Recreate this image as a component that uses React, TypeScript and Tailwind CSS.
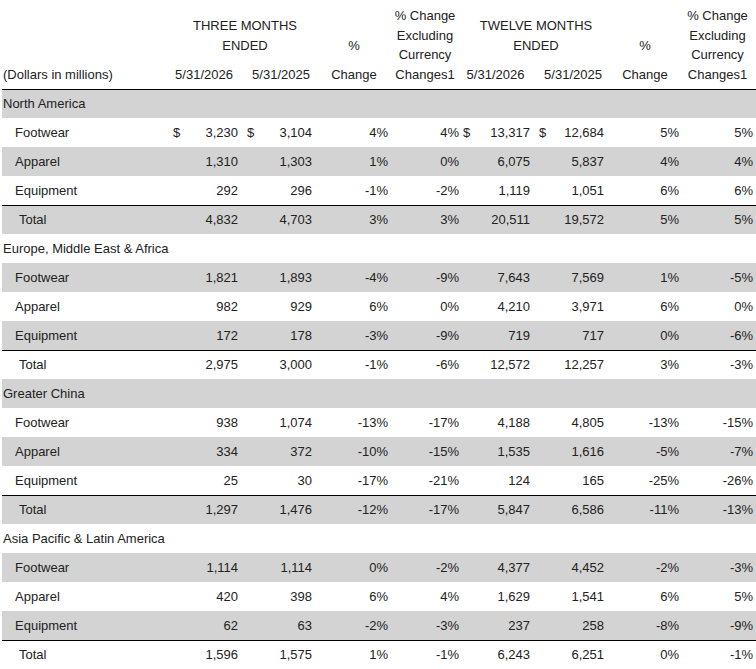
import React from "react";

type Row = { kind: "region" | "item" | "total"; label: string; v?: string[]; dollar?: boolean };

const regions: { name: string; rows: [string, string[]][] }[] = [
  {
    name: "North America",
    rows: [
      ["Footwear", ["3,230", "3,104", "4%", "4%", "13,317", "12,684", "5%", "5%"]],
      ["Apparel", ["1,310", "1,303", "1%", "0%", "6,075", "5,837", "4%", "4%"]],
      ["Equipment", ["292", "296", "-1%", "-2%", "1,119", "1,051", "6%", "6%"]],
      ["Total", ["4,832", "4,703", "3%", "3%", "20,511", "19,572", "5%", "5%"]],
    ],
  },
  {
    name: "Europe, Middle East & Africa",
    rows: [
      ["Footwear", ["1,821", "1,893", "-4%", "-9%", "7,643", "7,569", "1%", "-5%"]],
      ["Apparel", ["982", "929", "6%", "0%", "4,210", "3,971", "6%", "0%"]],
      ["Equipment", ["172", "178", "-3%", "-9%", "719", "717", "0%", "-6%"]],
      ["Total", ["2,975", "3,000", "-1%", "-6%", "12,572", "12,257", "3%", "-3%"]],
    ],
  },
  {
    name: "Greater China",
    rows: [
      ["Footwear", ["938", "1,074", "-13%", "-17%", "4,188", "4,805", "-13%", "-15%"]],
      ["Apparel", ["334", "372", "-10%", "-15%", "1,535", "1,616", "-5%", "-7%"]],
      ["Equipment", ["25", "30", "-17%", "-21%", "124", "165", "-25%", "-26%"]],
      ["Total", ["1,297", "1,476", "-12%", "-17%", "5,847", "6,586", "-11%", "-13%"]],
    ],
  },
  {
    name: "Asia Pacific & Latin America",
    rows: [
      ["Footwear", ["1,114", "1,114", "0%", "-2%", "4,377", "4,452", "-2%", "-3%"]],
      ["Apparel", ["420", "398", "6%", "4%", "1,629", "1,541", "6%", "5%"]],
      ["Equipment", ["62", "63", "-2%", "-3%", "237", "258", "-8%", "-9%"]],
      ["Total", ["1,596", "1,575", "1%", "-1%", "6,243", "6,251", "0%", "-1%"]],
    ],
  },
];

const rows: Row[] = [];
regions.forEach((r, ri) => {
  rows.push({ kind: "region", label: r.name });
  r.rows.forEach(([label, v], i) => {
    rows.push({
      kind: label === "Total" ? "total" : "item",
      label,
      v,
      dollar: ri === 0 && i === 0,
    });
  });
});

const cols = "grid grid-cols-[168px_68px_74px_76px_71px_71px_74px_75px_77px]";

function Header() {
  return (
    <div className={`${cols} grid-rows-[64px_25px] h-[89px] leading-[19.5px]`}>
      <div className="col-start-1 row-start-2 flex flex-col justify-end pb-[5px] pl-[1px]">
        (Dollars in millions)
      </div>
      <div className="col-start-2 col-span-2 row-start-1 flex flex-col justify-end pb-[9px] pl-[8px] text-center">
        <div>THREE MONTHS</div>
        <div>ENDED</div>
      </div>
      <div className="col-start-2 row-start-2 flex flex-col justify-end pb-[5px] text-center">5/31/2026</div>
      <div className="col-start-3 row-start-2 flex flex-col justify-end pb-[5px] pl-[12px] text-center">5/31/2025</div>
      <div className="col-start-4 row-start-1 flex flex-col justify-end pb-[9px] pl-[8px] text-center">%</div>
      <div className="col-start-4 row-start-2 flex flex-col justify-end pb-[5px] pl-[8px] text-center">Change</div>
      <div className="col-start-5 row-start-1 row-span-2 flex flex-col justify-end pb-[5px] pl-[3px] text-center">
        <div>% Change</div>
        <div>Excluding</div>
        <div>Currency</div>
        <div>Changes1</div>
      </div>
      <div className="col-start-6 col-span-2 row-start-1 flex flex-col justify-end pb-[9px] pl-[9px] text-center">
        <div>TWELVE MONTHS</div>
        <div>ENDED</div>
      </div>
      <div className="col-start-6 row-start-2 flex flex-col justify-end pb-[5px] pl-[2px] text-center">5/31/2026</div>
      <div className="col-start-7 row-start-2 flex flex-col justify-end pb-[5px] pl-[12px] text-center">5/31/2025</div>
      <div className="col-start-8 row-start-1 flex flex-col justify-end pb-[9px] pl-[7px] text-center">%</div>
      <div className="col-start-8 row-start-2 flex flex-col justify-end pb-[5px] pl-[7px] text-center">Change</div>
      <div className="col-start-9 row-start-1 row-span-2 flex flex-col justify-end pb-[5px] text-center">
        <div>% Change</div>
        <div>Excluding</div>
        <div>Currency</div>
        <div>Changes1</div>
      </div>
    </div>
  );
}

function Num({ value, dollar, pl, pr }: { value: string; dollar?: boolean; pl: string; pr?: string }) {
  return (
    <div className={`flex items-center justify-between ${pl} ${pr ?? ""}`}>
      <span>{dollar ? "$" : ""}</span>
      <span>{value}</span>
    </div>
  );
}

export default function App() {
  return (
    <div
      className="w-[756px] h-[669px] bg-white text-[13px] text-[#222] overflow-hidden"
      style={{ fontFamily: '"Liberation Sans", Arial, sans-serif' }}
    >
      <div className="ml-[2px] w-[754px]">
        <Header />
        {rows.map((r, i) => {
          const bg = i % 2 === 0 ? "bg-[#d3d3d3]" : "bg-white";
          const border = i === 0 || r.kind === "total" ? "border-t border-black" : "";
          if (r.kind === "region") {
            return (
              <div key={i} className={`h-[29px] flex items-center pl-[1px] ${bg} ${border}`}>
                {r.label}
              </div>
            );
          }
          const v = r.v!;
          return (
            <div key={i} className={`${cols} h-[29px] items-center ${bg} ${border}`}>
              <div className={r.kind === "total" ? "pl-[17px]" : "pl-[13px]"}>{r.label}</div>
              <Num value={v[0]} dollar={r.dollar} pl="pl-[3px]" />
              <Num value={v[1]} dollar={r.dollar} pl="pl-[9px]" />
              <Num value={v[2]} pl="" />
              <Num value={v[3]} pl="" />
              <Num value={v[4]} dollar={r.dollar} pl="pl-[4px]" />
              <Num value={v[5]} dollar={r.dollar} pl="pl-[9px]" />
              <Num value={v[6]} pl="" />
              <Num value={v[7]} pl="" pr="pr-[3px]" />
            </div>
          );
        })}
      </div>
    </div>
  );
}
